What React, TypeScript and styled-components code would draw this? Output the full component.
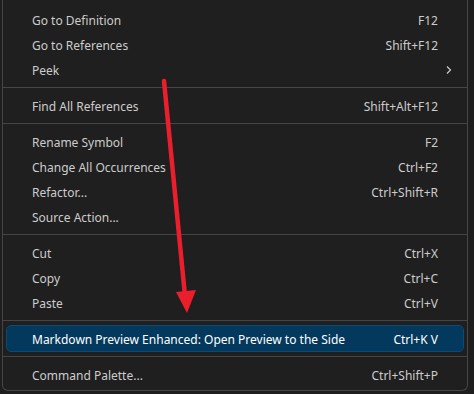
import React from 'react';
import styled, { createGlobalStyle } from 'styled-components';

const GlobalStyle = createGlobalStyle`
  html, body {
    margin: 0;
    padding: 0;
    background: #1e1e1e;
    overflow: hidden;
  }
`;

const Page = styled.div`
  position: relative;
  width: 474px;
  height: 394px;
  overflow: hidden;
  background: #1e1e1e;
  font-family: "Noto Sans", "Open Sans", sans-serif;
`;

const Menu = styled.div`
  margin-left: 2px;
  width: 464px;
  padding: 7px 0 3px;
  background: #1f1f1f;
  border: 1px solid #454545;
  border-top: none;
  border-radius: 0 0 6px 6px;
`;

const Row = styled.div<{ $active?: boolean }>`
  display: flex;
  align-items: center;
  height: 25px;
  margin: 0 4px;
  padding: 1px 25px 0;
  box-sizing: border-box;
  border-radius: 4px;
  font-size: 12px;
  color: ${p => (p.$active ? '#ffffff' : '#cccccc')};
  background: ${p => (p.$active ? '#04395e' : 'transparent')};
  outline: ${p => (p.$active ? '1px solid #0c4a75' : 'none')};
`;

const Label = styled.span`
  flex: 1;
  white-space: nowrap;
`;

const Shortcut = styled.span`
  white-space: nowrap;
`;

const Chevron = styled.span`
  margin-right: -16px;
  display: flex;
  align-items: center;
  color: #cccccc;
`;

const Separator = styled.div`
  height: 11px;
  display: flex;
  align-items: center;
  &::after {
    content: '';
    display: block;
    width: 100%;
    height: 1px;
    background: #454545;
  }
`;

const Arrow = styled.svg`
  position: absolute;
  left: 0;
  top: 0;
  pointer-events: none;
`;

type Item = { label: string; key?: string; sub?: boolean; active?: boolean } | 'sep';

const items: Item[] = [
  { label: 'Go to Definition', key: 'F12' },
  { label: 'Go to References', key: 'Shift+F12' },
  { label: 'Peek', sub: true },
  'sep',
  { label: 'Find All References', key: 'Shift+Alt+F12' },
  'sep',
  { label: 'Rename Symbol', key: 'F2' },
  { label: 'Change All Occurrences', key: 'Ctrl+F2' },
  { label: 'Refactor...', key: 'Ctrl+Shift+R' },
  { label: 'Source Action...' },
  'sep',
  { label: 'Cut', key: 'Ctrl+X' },
  { label: 'Copy', key: 'Ctrl+C' },
  { label: 'Paste', key: 'Ctrl+V' },
  'sep',
  { label: 'Markdown Preview Enhanced: Open Preview to the Side', key: 'Ctrl+K V', active: true },
  'sep',
  { label: 'Command Palette...', key: 'Ctrl+Shift+P' },
];

const App: React.FC = () => {
  return (
    <>
      <GlobalStyle />
      <Page>
        <Menu>
          {items.map((it, i) =>
            it === 'sep' ? (
              <Separator key={i} />
            ) : (
              <Row key={i} $active={it.active}>
                <Label>{it.label}</Label>
                {it.key && <Shortcut>{it.key}</Shortcut>}
                {it.sub && (
                  <Chevron>
                    <svg width="10" height="10" viewBox="0 0 10 10">
                      <path d="M3 1.5 L6.5 5 L3 8.5" fill="none" stroke="#cccccc" strokeWidth="1.2" />
                    </svg>
                  </Chevron>
                )}
              </Row>
            )
          )}
        </Menu>
        <Arrow width="474" height="394" viewBox="0 0 474 394">
          <line x1="164" y1="81" x2="185" y2="296" stroke="#ea1f2b" strokeWidth="4.5" strokeLinecap="round" />
          <polygon points="176,292 196,290 187,313" fill="#ea1f2b" />
        </Arrow>
      </Page>
    </>
  );
};

export default App;
